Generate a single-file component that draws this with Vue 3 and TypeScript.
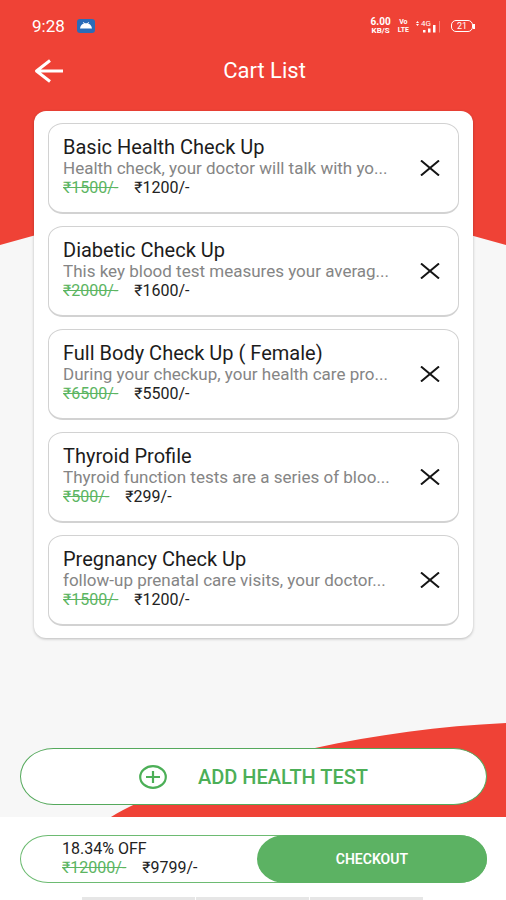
<script setup lang="ts">
import { computed, ref } from 'vue'

interface CartItem {
  id: number
  name: string
  description: string
  oldPrice: number
  price: number
}

const items = ref<CartItem[]>([
  { id: 1, name: 'Basic Health Check Up', description: 'Health check, your doctor will talk with yo...', oldPrice: 1500, price: 1200 },
  { id: 2, name: 'Diabetic Check Up', description: 'This key blood test measures your averag...', oldPrice: 2000, price: 1600 },
  { id: 3, name: 'Full Body Check Up ( Female)', description: 'During your checkup, your health care pro...', oldPrice: 6500, price: 5500 },
  { id: 4, name: 'Thyroid Profile', description: 'Thyroid function tests are a series of bloo...', oldPrice: 500, price: 299 },
  { id: 5, name: 'Pregnancy Check Up', description: 'follow-up prenatal care visits, your doctor...', oldPrice: 1500, price: 1200 },
])

const oldTotal = computed(() => items.value.reduce((sum, item) => sum + item.oldPrice, 0))
const total = computed(() => items.value.reduce((sum, item) => sum + item.price, 0))
const discount = computed(() =>
  oldTotal.value ? (((oldTotal.value - total.value) / oldTotal.value) * 100).toFixed(2) : '0.00',
)

function removeItem(id: number) {
  items.value = items.value.filter((item) => item.id !== id)
}
</script>

<template>
  <div class="screen">
    <div class="body">
      <svg class="wave wave-top" viewBox="0 0 506 245" preserveAspectRatio="none" aria-hidden="true">
        <path d="M0 0H506V245Q253 170 0 245Z" />
      </svg>
      <svg class="wave wave-bottom" viewBox="0 0 506 95" preserveAspectRatio="none" aria-hidden="true">
        <path d="M111 95C150 71 230 44 315 26C375 13 440 4 506 1V95Z" />
      </svg>

      <div class="status">
        <span class="clock">9:28</span>
        <svg class="app-badge" viewBox="0 0 18 14" aria-hidden="true">
          <rect width="18" height="14" rx="3" fill="#2b6cb8" />
          <path d="M3 9.500C3.400 6.800 5.200 5 7 4.600L5.800 3.400L6.300 3L7.800 4.300H10.200L11.700 3L12.200 3.400L11 4.600C12.800 5 14.600 6.800 15 9.500Z" fill="#fff" />
        </svg>
        <span class="spacer"></span>
        <span class="stack speed"><b>6.00</b><b>KB/S</b></span>
        <span class="stack volte"><b>Vo</b><b>LTE</b></span>
        <span class="signal">
          <span class="network">4G</span>
          <svg viewBox="0 0 27 13" aria-hidden="true">
            <path d="M1 3L2.500 1L4 3ZM1 4L2.500 6L4 4Z" fill="#fff" />
            <path d="M8 10H10.500V12.500H8ZM13 8.500H15.500V12.500H13ZM18 5H20.500V12.500H18Z" fill="#fff" />
            <path d="M24 1H25V12.500H24Z" fill="#fff" opacity=".35" />
          </svg>
        </span>
        <span class="battery"><span class="cell">21</span></span>
      </div>

      <header class="header">
        <button class="back" type="button" aria-label="Back">
          <svg viewBox="0 0 30 24" fill="none" stroke="#fff" stroke-width="3" stroke-linejoin="round" aria-hidden="true">
            <path d="M29 12H3M16 1.500L2.500 12L16 22.500" />
          </svg>
        </button>
        <h1>Cart List</h1>
      </header>

      <ul class="panel">
        <li v-for="item in items" :key="item.id" class="item">
          <div class="info">
            <h2>{{ item.name }}</h2>
            <p class="description">{{ item.description }}</p>
            <p class="prices"><s>₹{{ item.oldPrice }}/-</s><span>₹{{ item.price }}/-</span></p>
          </div>
          <button class="remove" type="button" :aria-label="`Remove ${item.name}`" @click="removeItem(item.id)">
            <svg viewBox="0 0 20 16" fill="none" stroke="#151515" stroke-width="2" aria-hidden="true">
              <path d="M1 .5L19 15.500M19 .5L1 15.500" />
            </svg>
          </button>
        </li>
      </ul>

      <button class="add" type="button">
        <svg viewBox="0 0 28 24" fill="none" stroke="#4caf57" aria-hidden="true">
          <ellipse cx="14" cy="12" rx="12.800" ry="10.800" stroke-width="2.200" />
          <path d="M7 12H21M14 6V18" stroke-width="2.200" />
        </svg>
        <span>ADD HEALTH TEST</span>
      </button>
    </div>

    <footer class="footer">
      <div class="summary">
        <div class="totals">
          <p>{{ discount }}% OFF</p>
          <p class="prices"><s>₹{{ oldTotal }}/-</s><span>₹{{ total }}/-</span></p>
        </div>
        <button class="checkout" type="button">CHECKOUT</button>
      </div>
      <div class="nav-hint" aria-hidden="true"><i></i><i></i><i></i></div>
    </footer>
  </div>
</template>

<style>
body {
  margin: 0;
  background: #fff;
}
</style>

<style scoped>
.screen {
  display: flex;
  flex-direction: column;
  min-height: 100vh;
  font-family: Roboto, "Noto Sans", sans-serif;
  color: #222;
  background: #fff;
}
h1,
h2,
p,
ul {
  margin: 0;
  padding: 0;
  font-weight: 400;
}
button {
  padding: 0;
  border: 0;
  background: none;
  font-family: inherit;
  cursor: pointer;
}
svg {
  display: block;
}
.body {
  position: relative;
  isolation: isolate;
  flex: 1;
  display: flex;
  flex-direction: column;
  padding: 0 19px 12px 20px;
  background: #f7f7f7;
}
.wave {
  position: absolute;
  left: 0;
  z-index: -1;
  width: 100%;
  fill: #ef4236;
}
.wave-top {
  top: 0;
  height: 245px;
}
.wave-bottom {
  bottom: 0;
  height: 95px;
}
.status {
  display: flex;
  align-items: center;
  height: 52px;
  padding: 0 12px;
  color: #fff;
}
.clock {
  font-size: 17px;
}
.app-badge {
  width: 18px;
  height: 14px;
  margin-left: 12px;
}
.spacer {
  flex: 1;
}
.stack {
  display: flex;
  flex-direction: column;
  align-items: center;
  font-size: 7px;
  line-height: 8px;
}
.speed {
  font-size: 8px;
}
.speed b:first-child {
  font-size: 10px;
  line-height: 10px;
}
.volte {
  margin-left: 7px;
}
.signal {
  display: grid;
  margin-left: 6px;
}
.signal > * {
  grid-area: 1 / 1;
}
.signal svg {
  width: 27px;
  height: 13px;
}
.network {
  padding-left: 6px;
  font-size: 8px;
  line-height: 8px;
}
.battery {
  display: flex;
  align-items: center;
  margin-left: 9px;
}
.cell {
  width: 20px;
  border: 1px solid #fff;
  border-radius: 5px;
  font-size: 9px;
  line-height: 10px;
  text-align: center;
}
.battery::after {
  content: "";
  width: 2px;
  height: 5px;
  background: #fff;
}
.header {
  display: grid;
  grid-template-columns: 30px 1fr 30px;
  align-items: center;
  height: 38px;
  padding: 0 14px;
  margin-bottom: 21px;
}
.back svg {
  width: 30px;
  height: 24px;
}
.header h1 {
  padding-left: 22px;
  color: #fff;
  font-size: 22px;
  line-height: 24px;
  text-align: center;
}
.panel {
  display: flex;
  flex-direction: column;
  gap: 12px;
  margin: 0 14px;
  padding: 12px 14px;
  list-style: none;
  border-radius: 12px;
  background: #fff;
  box-shadow: 0 1px 3px rgba(0, 0, 0, 0.25);
}
.item {
  box-sizing: border-box;
  display: flex;
  align-items: center;
  min-height: 91px;
  padding: 0 18px 0 14px;
  border: 1px solid #d2d2d2;
  border-bottom-width: 2px;
  border-radius: 15px / 13px;
}
.info {
  flex: 1;
  min-width: 0;
  padding-bottom: 3px;
}
.info h2 {
  color: #1c1c1c;
  font-size: 20px;
  line-height: 22px;
}
.description {
  overflow: hidden;
  color: #858585;
  font-size: 17px;
  line-height: 20px;
  white-space: nowrap;
}
.prices {
  display: flex;
  gap: 16px;
}
.prices s {
  color: #5cb562;
}
.info .prices,
.totals {
  font-size: 16px;
  line-height: 19px;
}
.remove svg {
  width: 20px;
  height: 16px;
}
.add {
  box-sizing: border-box;
  display: flex;
  align-items: center;
  justify-content: center;
  gap: 31px;
  height: 57px;
  margin-top: auto;
  border: 1px solid #55a95c;
  border-radius: 34px / 29px;
  background: #fff;
  color: #4caf57;
  font-size: 20px;
  font-weight: 500;
}
.add svg {
  width: 28px;
  height: 24px;
}
.footer {
  display: flex;
  flex-direction: column;
  padding: 18px 19px 0 20px;
}
.summary {
  box-sizing: border-box;
  display: flex;
  height: 48px;
  border: 1px solid #6dbb72;
  border-radius: 28px / 24px;
}
.totals {
  flex: 1;
  align-self: center;
  padding: 0 0 2px 41px;
}
.checkout {
  width: 49.500%;
  margin: -1px;
  border-radius: 28px / 24px;
  background: #5cb263;
  color: #fff;
  font-size: 14px;
  font-weight: 600;
}
.nav-hint {
  display: flex;
  gap: 1px;
  width: 73%;
  margin: 14px 0 0 62px;
}
.nav-hint i {
  flex: 1;
  height: 3px;
  background: #e6e6e6;
}
</style>
